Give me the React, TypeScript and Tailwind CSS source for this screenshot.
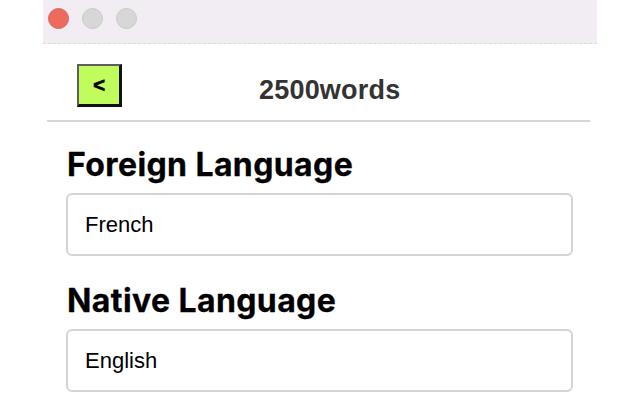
const sans = { fontFamily: '"Liberation Sans", Arial, sans-serif' };
const heading = { fontFamily: 'Inter, "Liberation Sans", sans-serif' };

export default function App() {
  return (
    <div className="relative h-[400px] w-[640px] overflow-hidden bg-white">
      <div className="ml-[43px] w-[554px]">
        <div className="flex h-[44px] items-start gap-[13px] border-b border-dashed border-[#dcd8dc] bg-[#f2edf2] pl-[5px] pt-[8px]">
          <span className="h-[21px] w-[21px] rounded-full border border-[#d9645a] bg-[#ec6a5e]" />
          <span className="h-[21px] w-[21px] rounded-full border border-[#c9c9c9] bg-[#d7d7d7]" />
          <span className="h-[21px] w-[21px] rounded-full border border-[#c9c9c9] bg-[#d7d7d7]" />
        </div>
        <div className="flex h-[76px] items-start">
          <button className="ml-[34px] mt-[20px] flex h-[43px] w-[45px] items-center justify-center border-2 border-b-[3px] border-r-[3px] border-t-[#5e5e5e] border-l-[#5e5e5e] border-r-[#111] border-b-[#111] bg-[#c0fc5c] text-[20px] font-black leading-none text-black [-webkit-text-stroke:0.8px_black]" style={sans}>
            &lt;
          </button>
          <h1 className="ml-[137px] mt-[30px] text-[27px] font-bold leading-[32px] tracking-[0.2px] text-[#333]" style={sans}>
            2500words
          </h1>
        </div>
        <div className="ml-[4px] mr-[7px] h-[2px] bg-[#d6d6d6]" />
        <div className="pl-[23px] pr-[24px]">
          <h2 className="mt-[25px] pl-[1px] text-[32px] font-bold leading-[36px] tracking-[0.4px] text-black [-webkit-text-stroke:0.3px_black]" style={heading}>
            Foreign Language
          </h2>
          <div className="mt-[10px] flex h-[63px] items-center rounded-[6px] border-2 border-[#d4d4d4] px-[17px] text-[22px] text-black" style={sans}>
            French
          </div>
          <h2 className="mt-[27px] pl-[1px] text-[32px] font-bold leading-[36px] tracking-[0.4px] text-black [-webkit-text-stroke:0.3px_black]" style={heading}>
            Native Language
          </h2>
          <div className="mt-[10px] flex h-[63px] items-center rounded-[6px] border-2 border-[#d4d4d4] px-[17px] text-[22px] text-black" style={sans}>
            English
          </div>
        </div>
      </div>
    </div>
  );
}
